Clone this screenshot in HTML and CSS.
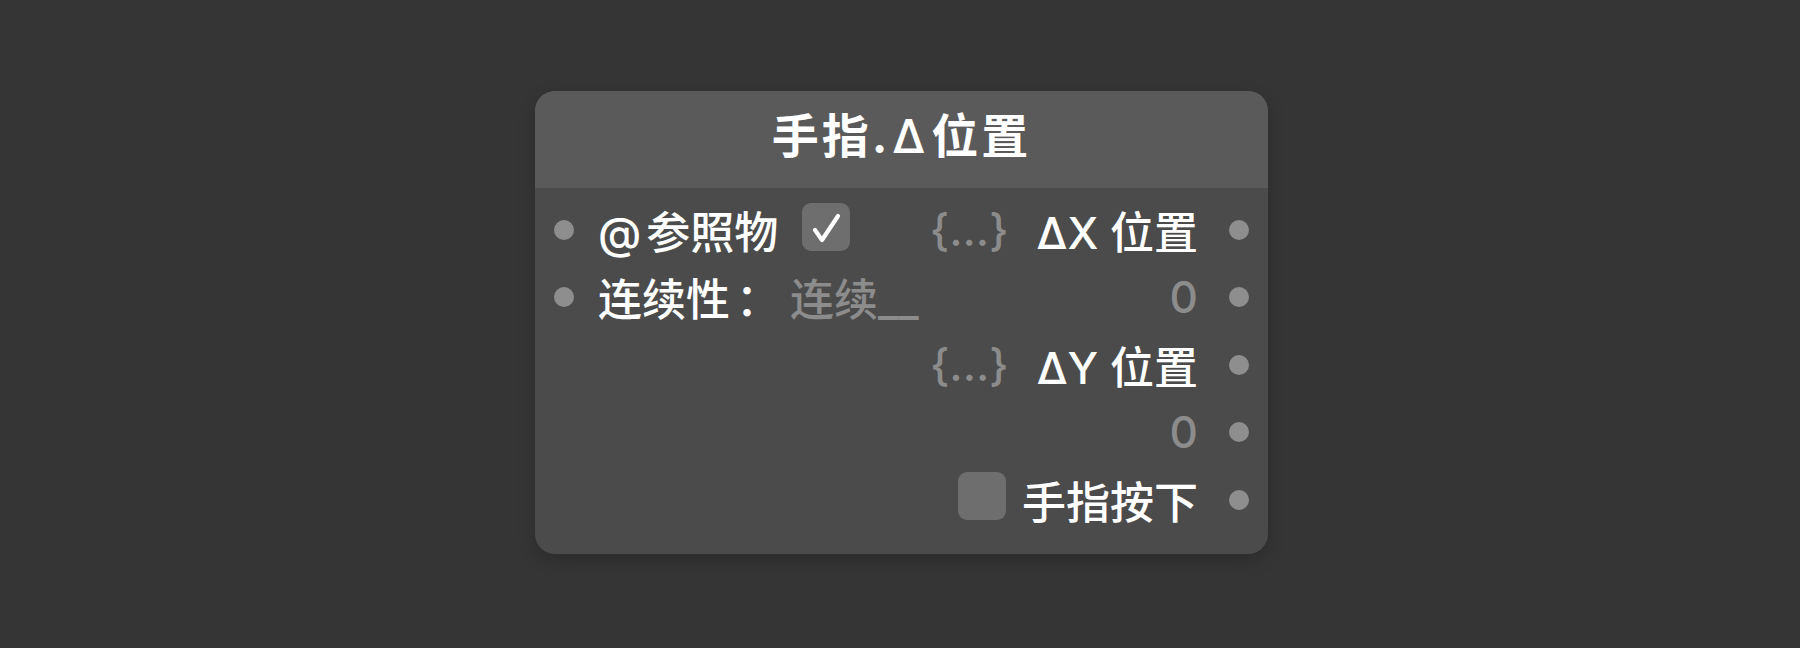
FILE: index.html
```html
<!DOCTYPE html>
<html lang="zh-CN">
<head>
  <meta charset="UTF-8">
  <title>手指.Δ位置</title>
  <link rel="stylesheet" href="styles.css">
</head>
<body>
  <div class="node">
    <div class="node-title"><span>手指.<span class="delta">Δ</span>位置</span></div>

    <div class="node-body">
      <div class="ports inputs">
        <div class="port">
          <span class="dot"></span>
          <span class="label">@<span class="at-gap"></span>参照物</span>
          <span class="check on">
            <svg width="48" height="48" viewBox="0 0 48 48">
              <path d="M13 27 L20 37 L36 13" fill="none" stroke="#fff" stroke-width="4.2" stroke-linecap="round" stroke-linejoin="round"/>
            </svg>
          </span>
        </div>
        <div class="port">
          <span class="dot"></span>
          <span class="label">连续性<span class="colon">：</span></span>
          <span class="value">连续__</span>
        </div>
      </div>

      <div class="ports outputs">
        <div class="port">
          <span class="value">{...}</span>
          <span class="label">ΔX 位置</span>
          <span class="dot"></span>
        </div>
        <div class="port">
          <span class="value">0</span>
          <span class="dot"></span>
        </div>
        <div class="port">
          <span class="value">{...}</span>
          <span class="label">ΔY 位置</span>
          <span class="dot"></span>
        </div>
        <div class="port">
          <span class="value">0</span>
          <span class="dot"></span>
        </div>
        <div class="port">
          <span class="check"></span>
          <span class="label plain">手指按下</span>
          <span class="dot"></span>
        </div>
      </div>
    </div>
  </div>
</body>
</html>
```

FILE: styles.css
```css
body {
  margin: 0;
  height: 648px;
  background-color: #353535;
  font-family: "Inter", "Noto Sans CJK SC", sans-serif;
  color: #fff;
  display: flex;
  justify-content: center;
  align-items: flex-start;
  padding-top: 91px;
  box-sizing: border-box;
}
.node {
  width: 733px;
  margin-left: 3px;
  background-color: #4b4b4b;
  border-radius: 20px;
  overflow: hidden;
  box-shadow: 0 6px 18px rgba(0, 0, 0, 0.18);
}
.node-title {
  height: 97px;
  padding-bottom: 15px;
  box-sizing: border-box;
  background-color: #5a5a5a;
  display: flex;
  align-items: center;
  justify-content: center;
  font-size: 47px;
  font-weight: 700;
  letter-spacing: 3px;
}
.delta {
  font-weight: 500;
  margin: 0 3px 0 2px;
}
.node-body {
  display: grid;
  grid-template-columns: 1fr 1fr;
  padding: 8px 19px 20px 19px;
}
.ports {
  display: flex;
  flex-direction: column;
}
.port {
  height: 67.5px;
  display: flex;
  align-items: center;
  font-size: 44px;
  font-weight: 500;
}
.outputs .port {
  justify-content: flex-end;
}
.dot {
  width: 20px;
  height: 20px;
  border-radius: 50%;
  background-color: #8e8e8e;
  flex: none;
}
.inputs .dot {
  margin-right: 24px;
}
.outputs .dot {
  margin-left: 31px;
}
.label {
  white-space: pre;
}
.at-gap {
  display: inline-block;
  width: 5px;
}
.colon {
  margin-left: 6px;
}
.value {
  color: #8c8c8c;
  white-space: pre;
}
.inputs .value {
  margin-left: 10px;
}
.outputs .label {
  margin-left: 28px;
}
.outputs .label.plain {
  margin-left: 0;
}
.check {
  width: 48px;
  height: 48px;
  border-radius: 9px;
  background-color: #6e6e6e;
  flex: none;
  margin-top: -6px;
}
.inputs .check {
  margin-left: 24px;
}
.outputs .check {
  margin-right: 16px;
  margin-top: -8px;
}
.check svg {
  display: block;
}
```
